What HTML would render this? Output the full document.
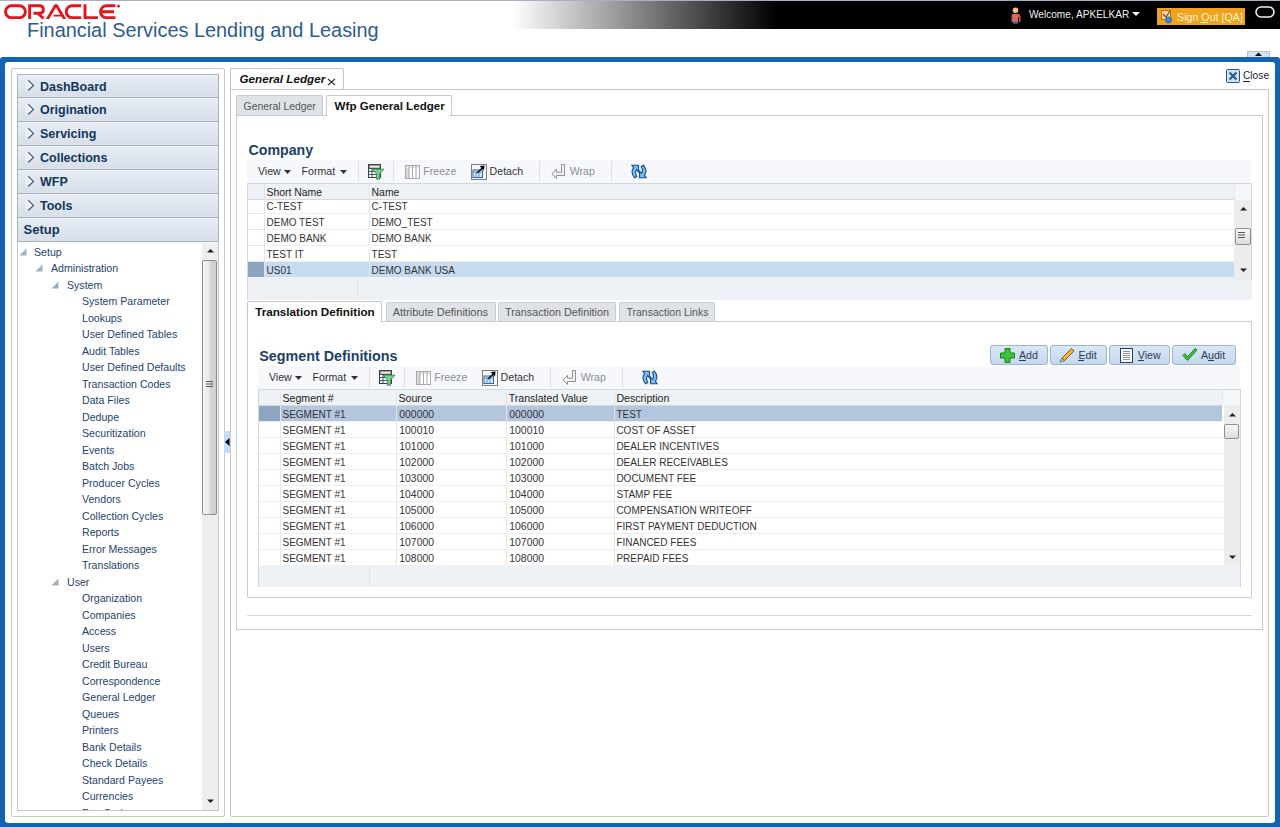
<!DOCTYPE html>
<html><head><meta charset="utf-8"><style>
html,body{margin:0;padding:0}
body{width:1280px;height:827px;overflow:hidden;position:relative;background:#fff;font-family:"Liberation Sans", sans-serif}
.t{position:absolute;white-space:nowrap;font-family:"Liberation Sans", sans-serif}
div{box-sizing:content-box}
</style></head><body>
<div style="position:absolute;left:0px;top:0px;width:1280px;height:1px;background:#a9b0c4"></div>
<div style="position:absolute;left:0px;top:1px;width:1280px;height:28px;background:linear-gradient(to right,#fff 512px,#000 776px)"></div>
<svg style="position:absolute;left:0;top:0" width="125" height="24" viewBox="0 0 125 24"><g fill="none" stroke="#e2151c" stroke-width="2.9"><rect x="5.55" y="5.75" width="19.8" height="11.9" rx="5.95"/><path d="M29.65 19.1 V5.75 H40 A3.8 3.8 0 0 1 40 13.3 H33.5 M37.2 13 L43.6 18.3"/><path d="M81.2 5.75 H72.2 A5.95 5.95 0 0 0 72.2 17.65 H81.2"/><path d="M85 4.3 V17.65 H98"/><path d="M115.4 5.75 H106.5 A5.95 5.95 0 0 0 106.5 17.65 H115.4 M102 11.7 H114"/></g><path d="M45.8 19.1 L54.6 4.3 L57.4 4.3 L66.2 19.1 L62.9 19.1 L56 7.6 L49.1 19.1z M53.6 14.7 H61.2 V16.4 H53.6z" fill="#e2151c"/><circle cx="118.5" cy="6.2" r="1.4" fill="#e2151c"/></svg>
<div class="t" style="left:27px;top:18.60px;font-size:19.9px;line-height:23px;color:#2d5b92;font-weight:normal;font-style:normal;">Financial Services Lending and Leasing</div>
<svg style="position:absolute;left:1009px;top:7px" width="13" height="17" viewBox="0 0 13 17"><circle cx="6.5" cy="3.3" r="2.8" fill="#f4c27e"/><path d="M3 7 h7 l1.5 2 v6 h-1.5 v-5 h-6 v5 h-1.5 v-6z" fill="#d9534a"/><rect x="4" y="7" width="5" height="7" fill="#e06a5e"/><rect x="4" y="14" width="5" height="2.5" fill="#4a78b8"/></svg>
<div class="t" style="left:1029px;top:9.00px;font-size:10.1px;line-height:12px;color:#f0f0f0;font-weight:normal;font-style:normal;">Welcome, APKELKAR</div>
<svg style="position:absolute;left:1132px;top:12px" width="9" height="5" viewBox="0 0 9 5"><path d="M0 0h8l-4 4z" fill="#fff"/></svg>
<div style="position:absolute;left:1157px;top:8px;width:88px;height:17px;background:#f1a31c"></div>
<svg style="position:absolute;left:1160px;top:9px" width="14" height="15" viewBox="0 0 14 15"><rect x="1.5" y="1.5" width="9" height="9" fill="#f3d9a8" stroke="#b0722a" stroke-width="1"/><path d="M3 5 L6 8 L10 2" fill="none" stroke="#8a4a10" stroke-width="1.2"/><circle cx="8.5" cy="11" r="3" fill="#3f86d6" stroke="#1d5aa6" stroke-width="0.8"/></svg>
<div class="t" style="left:1177px;top:11.29px;font-size:10.7px;line-height:12px;color:#fff4d8;font-weight:normal;font-style:normal;">Sign Out [QA]</div>
<div style="position:absolute;left:1200px;top:22px;width:8px;height:1px;background:#fff4d8"></div>
<svg style="position:absolute;left:1255px;top:6px" width="20" height="12" viewBox="0 0 20 12"><rect x="1" y="1" width="18" height="10" rx="5" fill="none" stroke="#e8eefc" stroke-width="1.6"/></svg>
<div style="position:absolute;left:1247px;top:51px;width:21px;height:6px;background:#d3e3f5;border:1px solid #b9c3cf;border-bottom:none"></div>
<svg style="position:absolute;left:1255px;top:52px" width="8" height="5" viewBox="0 0 8 5"><path d="M0 4h7l-3.5-3.5z" fill="#000"/></svg>
<div style="position:absolute;left:0px;top:57px;width:1280px;height:770px;background:#1463b2;border-radius:3px 3px 0 0"></div>
<div style="position:absolute;left:5px;top:62px;width:1270px;height:761px;background:#fff;border-radius:3px"></div>
<div style="position:absolute;left:11px;top:68px;width:212px;height:747px;border:1px solid #c5c9cf;border-radius:2px"></div>
<div style="position:absolute;left:17px;top:74px;width:200px;height:22px;background:linear-gradient(#e6ecf4,#d8dfe9);border:1px solid #aab2bd;border-bottom:none;box-shadow:inset 0 1px 0 #eef3f9"></div>
<svg style="position:absolute;left:25px;top:80px" width="10" height="12" viewBox="0 0 10 12"><path d="M0.5 2.5 L3.2 0.3 L8.5 5.4 L3.2 10.5 L0.5 8.5z" fill="#f1f5fa" stroke="none"/><path d="M3.2 0.3 L8.5 5.4 L3.2 10.5" fill="none" stroke="#3a4f6e" stroke-width="1.1"/></svg>
<div class="t" style="left:40px;top:79.67px;font-size:12.5px;line-height:14px;color:#12355e;font-weight:bold;font-style:normal;">DashBoard</div>
<div style="position:absolute;left:17px;top:97px;width:200px;height:23px;background:linear-gradient(#e6ecf4,#d8dfe9);border:1px solid #aab2bd;border-bottom:none;box-shadow:inset 0 1px 0 #eef3f9"></div>
<svg style="position:absolute;left:25px;top:104px" width="10" height="12" viewBox="0 0 10 12"><path d="M0.5 2.5 L3.2 0.3 L8.5 5.4 L3.2 10.5 L0.5 8.5z" fill="#f1f5fa" stroke="none"/><path d="M3.2 0.3 L8.5 5.4 L3.2 10.5" fill="none" stroke="#3a4f6e" stroke-width="1.1"/></svg>
<div class="t" style="left:40px;top:102.67px;font-size:12.5px;line-height:14px;color:#12355e;font-weight:bold;font-style:normal;">Origination</div>
<div style="position:absolute;left:17px;top:121px;width:200px;height:23px;background:linear-gradient(#e6ecf4,#d8dfe9);border:1px solid #aab2bd;border-bottom:none;box-shadow:inset 0 1px 0 #eef3f9"></div>
<svg style="position:absolute;left:25px;top:128px" width="10" height="12" viewBox="0 0 10 12"><path d="M0.5 2.5 L3.2 0.3 L8.5 5.4 L3.2 10.5 L0.5 8.5z" fill="#f1f5fa" stroke="none"/><path d="M3.2 0.3 L8.5 5.4 L3.2 10.5" fill="none" stroke="#3a4f6e" stroke-width="1.1"/></svg>
<div class="t" style="left:40px;top:126.67px;font-size:12.5px;line-height:14px;color:#12355e;font-weight:bold;font-style:normal;">Servicing</div>
<div style="position:absolute;left:17px;top:145px;width:200px;height:23px;background:linear-gradient(#e6ecf4,#d8dfe9);border:1px solid #aab2bd;border-bottom:none;box-shadow:inset 0 1px 0 #eef3f9"></div>
<svg style="position:absolute;left:25px;top:152px" width="10" height="12" viewBox="0 0 10 12"><path d="M0.5 2.5 L3.2 0.3 L8.5 5.4 L3.2 10.5 L0.5 8.5z" fill="#f1f5fa" stroke="none"/><path d="M3.2 0.3 L8.5 5.4 L3.2 10.5" fill="none" stroke="#3a4f6e" stroke-width="1.1"/></svg>
<div class="t" style="left:40px;top:150.67px;font-size:12.5px;line-height:14px;color:#12355e;font-weight:bold;font-style:normal;">Collections</div>
<div style="position:absolute;left:17px;top:169px;width:200px;height:23px;background:linear-gradient(#e6ecf4,#d8dfe9);border:1px solid #aab2bd;border-bottom:none;box-shadow:inset 0 1px 0 #eef3f9"></div>
<svg style="position:absolute;left:25px;top:176px" width="10" height="12" viewBox="0 0 10 12"><path d="M0.5 2.5 L3.2 0.3 L8.5 5.4 L3.2 10.5 L0.5 8.5z" fill="#f1f5fa" stroke="none"/><path d="M3.2 0.3 L8.5 5.4 L3.2 10.5" fill="none" stroke="#3a4f6e" stroke-width="1.1"/></svg>
<div class="t" style="left:40px;top:174.67px;font-size:12.5px;line-height:14px;color:#12355e;font-weight:bold;font-style:normal;">WFP</div>
<div style="position:absolute;left:17px;top:193px;width:200px;height:23px;background:linear-gradient(#e6ecf4,#d8dfe9);border:1px solid #aab2bd;border-bottom:none;box-shadow:inset 0 1px 0 #eef3f9"></div>
<svg style="position:absolute;left:25px;top:200px" width="10" height="12" viewBox="0 0 10 12"><path d="M0.5 2.5 L3.2 0.3 L8.5 5.4 L3.2 10.5 L0.5 8.5z" fill="#f1f5fa" stroke="none"/><path d="M3.2 0.3 L8.5 5.4 L3.2 10.5" fill="none" stroke="#3a4f6e" stroke-width="1.1"/></svg>
<div class="t" style="left:40px;top:198.67px;font-size:12.5px;line-height:14px;color:#12355e;font-weight:bold;font-style:normal;">Tools</div>
<div style="position:absolute;left:17px;top:217px;width:200px;height:23px;background:linear-gradient(#e6ecf4,#d8dfe9);border:1px solid #aab2bd;box-shadow:inset 0 1px 0 #eef3f9"></div>
<div class="t" style="left:23.5px;top:221.50px;font-size:13px;line-height:15px;color:#12355e;font-weight:bold;font-style:normal;">Setup</div>
<div style="position:absolute;left:17px;top:242px;width:200px;height:568px;border:1px solid #c5c9cf;border-top:none;background:#fff"></div>
<div style="position:absolute;left:202px;top:243px;width:16px;height:567px;background:#eeeeee"></div>
<svg style="position:absolute;left:206px;top:248px" width="9" height="5" viewBox="0 0 9 5"><path d="M1 4.5h7l-3.5-3.5z" fill="#222"/></svg>
<div style="position:absolute;left:202px;top:260px;width:13px;height:253px;background:linear-gradient(to right,#f4f4f4,#ececec 45%,#d6d6d6 55%,#cdcdcd);border:1px solid #8f8f8f;border-radius:2px"></div>
<svg style="position:absolute;left:206px;top:381px" width="8" height="7" viewBox="0 0 8 7"><path d="M0 .5h7M0 3h7M0 5.5h7" stroke="#555" stroke-width="1"/></svg>
<svg style="position:absolute;left:206px;top:799px" width="9" height="5" viewBox="0 0 9 5"><path d="M1 0.5h7l-3.5 3.5z" fill="#222"/></svg>
<div style="position:absolute;left:18px;top:243px;width:184px;height:567px;overflow:hidden">
<svg style="position:absolute;left:1px;top:4.5px" width="8" height="8" viewBox="0 0 8 8"><path d="M7.5 0.5 L7.5 7.5 L0.5 7.5z" fill="#9eadc0"/></svg>
<div class="t" style="left:16px;top:3.33px;font-size:10.6px;line-height:12px;color:#1e3f70;font-weight:normal;font-style:normal;">Setup</div>
<svg style="position:absolute;left:17px;top:20.5px" width="8" height="8" viewBox="0 0 8 8"><path d="M7.5 0.5 L7.5 7.5 L0.5 7.5z" fill="#9eadc0"/></svg>
<div class="t" style="left:33px;top:19.33px;font-size:10.6px;line-height:12px;color:#1e3f70;font-weight:normal;font-style:normal;">Administration</div>
<svg style="position:absolute;left:33px;top:37.5px" width="8" height="8" viewBox="0 0 8 8"><path d="M7.5 0.5 L7.5 7.5 L0.5 7.5z" fill="#9eadc0"/></svg>
<div class="t" style="left:49px;top:36.33px;font-size:10.6px;line-height:12px;color:#1e3f70;font-weight:normal;font-style:normal;">System</div>
<div class="t" style="left:64px;top:52.33px;font-size:10.6px;line-height:12px;color:#1e3f70;font-weight:normal;font-style:normal;">System Parameter</div>
<div class="t" style="left:64px;top:69.33px;font-size:10.6px;line-height:12px;color:#1e3f70;font-weight:normal;font-style:normal;">Lookups</div>
<div class="t" style="left:64px;top:85.33px;font-size:10.6px;line-height:12px;color:#1e3f70;font-weight:normal;font-style:normal;">User Defined Tables</div>
<div class="t" style="left:64px;top:102.33px;font-size:10.6px;line-height:12px;color:#1e3f70;font-weight:normal;font-style:normal;">Audit Tables</div>
<div class="t" style="left:64px;top:118.33px;font-size:10.6px;line-height:12px;color:#1e3f70;font-weight:normal;font-style:normal;">User Defined Defaults</div>
<div class="t" style="left:64px;top:135.33px;font-size:10.6px;line-height:12px;color:#1e3f70;font-weight:normal;font-style:normal;">Transaction Codes</div>
<div class="t" style="left:64px;top:151.33px;font-size:10.6px;line-height:12px;color:#1e3f70;font-weight:normal;font-style:normal;">Data Files</div>
<div class="t" style="left:64px;top:168.33px;font-size:10.6px;line-height:12px;color:#1e3f70;font-weight:normal;font-style:normal;">Dedupe</div>
<div class="t" style="left:64px;top:184.33px;font-size:10.6px;line-height:12px;color:#1e3f70;font-weight:normal;font-style:normal;">Securitization</div>
<div class="t" style="left:64px;top:201.33px;font-size:10.6px;line-height:12px;color:#1e3f70;font-weight:normal;font-style:normal;">Events</div>
<div class="t" style="left:64px;top:217.33px;font-size:10.6px;line-height:12px;color:#1e3f70;font-weight:normal;font-style:normal;">Batch Jobs</div>
<div class="t" style="left:64px;top:234.33px;font-size:10.6px;line-height:12px;color:#1e3f70;font-weight:normal;font-style:normal;">Producer Cycles</div>
<div class="t" style="left:64px;top:250.33px;font-size:10.6px;line-height:12px;color:#1e3f70;font-weight:normal;font-style:normal;">Vendors</div>
<div class="t" style="left:64px;top:267.33px;font-size:10.6px;line-height:12px;color:#1e3f70;font-weight:normal;font-style:normal;">Collection Cycles</div>
<div class="t" style="left:64px;top:283.33px;font-size:10.6px;line-height:12px;color:#1e3f70;font-weight:normal;font-style:normal;">Reports</div>
<div class="t" style="left:64px;top:300.33px;font-size:10.6px;line-height:12px;color:#1e3f70;font-weight:normal;font-style:normal;">Error Messages</div>
<div class="t" style="left:64px;top:316.33px;font-size:10.6px;line-height:12px;color:#1e3f70;font-weight:normal;font-style:normal;">Translations</div>
<svg style="position:absolute;left:33px;top:334.5px" width="8" height="8" viewBox="0 0 8 8"><path d="M7.5 0.5 L7.5 7.5 L0.5 7.5z" fill="#9eadc0"/></svg>
<div class="t" style="left:49px;top:333.33px;font-size:10.6px;line-height:12px;color:#1e3f70;font-weight:normal;font-style:normal;">User</div>
<div class="t" style="left:64px;top:349.33px;font-size:10.6px;line-height:12px;color:#1e3f70;font-weight:normal;font-style:normal;">Organization</div>
<div class="t" style="left:64px;top:366.33px;font-size:10.6px;line-height:12px;color:#1e3f70;font-weight:normal;font-style:normal;">Companies</div>
<div class="t" style="left:64px;top:382.33px;font-size:10.6px;line-height:12px;color:#1e3f70;font-weight:normal;font-style:normal;">Access</div>
<div class="t" style="left:64px;top:399.33px;font-size:10.6px;line-height:12px;color:#1e3f70;font-weight:normal;font-style:normal;">Users</div>
<div class="t" style="left:64px;top:415.33px;font-size:10.6px;line-height:12px;color:#1e3f70;font-weight:normal;font-style:normal;">Credit Bureau</div>
<div class="t" style="left:64px;top:432.33px;font-size:10.6px;line-height:12px;color:#1e3f70;font-weight:normal;font-style:normal;">Correspondence</div>
<div class="t" style="left:64px;top:448.33px;font-size:10.6px;line-height:12px;color:#1e3f70;font-weight:normal;font-style:normal;">General Ledger</div>
<div class="t" style="left:64px;top:465.33px;font-size:10.6px;line-height:12px;color:#1e3f70;font-weight:normal;font-style:normal;">Queues</div>
<div class="t" style="left:64px;top:481.33px;font-size:10.6px;line-height:12px;color:#1e3f70;font-weight:normal;font-style:normal;">Printers</div>
<div class="t" style="left:64px;top:498.33px;font-size:10.6px;line-height:12px;color:#1e3f70;font-weight:normal;font-style:normal;">Bank Details</div>
<div class="t" style="left:64px;top:514.33px;font-size:10.6px;line-height:12px;color:#1e3f70;font-weight:normal;font-style:normal;">Check Details</div>
<div class="t" style="left:64px;top:531.33px;font-size:10.6px;line-height:12px;color:#1e3f70;font-weight:normal;font-style:normal;">Standard Payees</div>
<div class="t" style="left:64px;top:547.33px;font-size:10.6px;line-height:12px;color:#1e3f70;font-weight:normal;font-style:normal;">Currencies</div>
<div class="t" style="left:64px;top:564.33px;font-size:10.6px;line-height:12px;color:#1e3f70;font-weight:normal;font-style:normal;">Fee Codes</div>
</div>
<div style="position:absolute;left:224px;top:431px;width:6px;height:22px;background:#c6dcf3"></div>
<svg style="position:absolute;left:225px;top:438px" width="5" height="8" viewBox="0 0 5 8"><path d="M4.5 0 V8 L0 4z" fill="#000"/></svg>
<div style="position:absolute;left:230px;top:68px;width:112px;height:21px;border:1px solid #c5c9cf;border-bottom:none;border-radius:0 3px 0 0;background:#fff"></div>
<div class="t" style="left:239.5px;top:71.75px;font-size:11.7px;line-height:13px;color:#111;font-weight:bold;font-style:italic;">General Ledger</div>
<svg style="position:absolute;left:327px;top:78px" width="9" height="8" viewBox="0 0 9 8"><path d="M1 1 L8 7 M8 1 L1 7" stroke="#333" stroke-width="1.2"/></svg>
<div style="position:absolute;left:230px;top:89px;width:1037px;height:726px;border:1px solid #c5c9cf;border-radius:0 0 2px 2px"></div>
<svg style="position:absolute;left:1226px;top:69px" width="14" height="14" viewBox="0 0 14 14"><rect x="0.5" y="0.5" width="13" height="13" rx="1" fill="#cfe3f7" stroke="#29507f"/><path d="M3.5 3.5 L10.5 10.5 M10.5 3.5 L3.5 10.5" stroke="#2b5a8e" stroke-width="2.2"/></svg>
<div class="t" style="left:1243px;top:70.47px;font-size:10.2px;line-height:12px;color:#1a2436;font-weight:normal;font-style:normal;text-decoration:none">Close</div>
<div style="position:absolute;left:1243px;top:81px;width:7px;height:1px;background:#1a2436"></div>
<div style="position:absolute;left:236px;top:95px;width:85px;height:20px;background:#dfe3e8;border:1px solid #c9cdd3;border-bottom:none;border-radius:2px 2px 0 0"></div>
<div class="t" style="left:243.6px;top:101.40px;font-size:10.4px;line-height:12px;color:#555;font-weight:normal;font-style:normal;">General Ledger</div>
<div style="position:absolute;left:326px;top:95px;width:124px;height:20px;background:#fff;border:1px solid #c5c9cf;border-bottom:none;border-radius:2px 2px 0 0"></div>
<div class="t" style="left:334.6px;top:99.18px;font-size:11.6px;line-height:13px;color:#111;font-weight:bold;font-style:normal;">Wfp General Ledger</div>
<div style="position:absolute;left:236px;top:115px;width:1025px;height:514px;border:1px solid #c9cdd3;border-top:none"></div>
<div style="position:absolute;left:236px;top:115px;width:90px;height:1px;background:#c9cdd3"></div>
<div style="position:absolute;left:450px;top:115px;width:812px;height:1px;background:#c9cdd3"></div>
<div class="t" style="left:248.5px;top:142.08px;font-size:14.2px;line-height:16px;color:#1b3f6a;font-weight:bold;font-style:normal;">Company</div>
<div style="position:absolute;left:247px;top:160px;width:1004px;height:23px;background:#f6f8fc"></div>
<div class="t" style="left:258px;top:164.83px;font-size:10.6px;line-height:12px;color:#333;font-weight:normal;font-style:normal;">View</div>
<svg style="position:absolute;left:284px;top:170px" width="7" height="4" viewBox="0 0 7 4"><path d="M0 0h7l-3.5 4z" fill="#333"/></svg>
<div class="t" style="left:301.6px;top:164.83px;font-size:10.6px;line-height:12px;color:#333;font-weight:normal;font-style:normal;">Format</div>
<svg style="position:absolute;left:340px;top:170px" width="7" height="4" viewBox="0 0 7 4"><path d="M0 0h7l-3.5 4z" fill="#333"/></svg>
<div style="position:absolute;left:358px;top:161px;width:1px;height:21px;background:#dde1e6"></div>
<svg style="position:absolute;left:368px;top:164px" width="17" height="16" viewBox="0 0 17 16"><rect x="0.5" y="0.5" width="12" height="13" fill="#fff" stroke="#34445f"/><rect x="1.5" y="1.5" width="10" height="2.5" fill="#f3efd6" stroke="#6b5a3a" stroke-width="0.6"/><path d="M0.5 4.5h12M0.5 7.5h12M0.5 10.5h12M4 4.5v9" stroke="#34445f" stroke-width="0.9"/><path d="M4 5.2 H16 L11.5 10 V15.2 L8.5 15.2 V10z" fill="#74d08a" stroke="#2f8040" stroke-width="0.8"/></svg>
<div style="position:absolute;left:393px;top:161px;width:1px;height:21px;background:#dde1e6"></div>
<svg style="position:absolute;left:405px;top:165px" width="16" height="15" viewBox="0 0 16 15"><rect x="0.5" y="0.5" width="14" height="13" fill="#fff" stroke="#a9a9a9"/><rect x="1" y="1" width="13" height="2" fill="#e6e6e6"/><rect x="1" y="3" width="3" height="10" fill="#d8d8d8"/><path d="M4 .5v13M7.5 .5v13M11 .5v13" stroke="#a9a9a9"/></svg>
<div class="t" style="left:423.3px;top:164.83px;font-size:10.6px;line-height:12px;color:#8a8f96;font-weight:normal;font-style:normal;">Freeze</div>
<svg style="position:absolute;left:471px;top:164px" width="16" height="16" viewBox="0 0 16 16"><rect x="0.5" y="0.5" width="15" height="15" fill="none" stroke="#000" stroke-width="1" stroke-dasharray="1 1"/><rect x="2" y="6" width="9.5" height="7.5" fill="#d6ebff" stroke="#2c64a8" stroke-width="1"/><path d="M2 8h9.5M5 8v5.5M8 8v5.5" stroke="#4f86c6" stroke-width="0.9"/><path d="M6 9 L12.5 3" stroke="#000" stroke-width="1.4"/><path d="M8.5 2 L13.5 1.5 L13 6.5z" fill="#000"/></svg>
<div class="t" style="left:489.6px;top:164.83px;font-size:10.6px;line-height:12px;color:#333;font-weight:normal;font-style:normal;">Detach</div>
<div style="position:absolute;left:539px;top:161px;width:1px;height:21px;background:#dde1e6"></div>
<svg style="position:absolute;left:551px;top:164px" width="15" height="16" viewBox="0 0 15 16"><path d="M10.5 0.5 H13.5 V11.5 H5.5 V14.5 L0.8 9.8 L5.5 5.3 V8.2 H10.5 Z" fill="#f2f2f2" stroke="#8f8f8f" stroke-width="1"/></svg>
<div class="t" style="left:569.7px;top:164.83px;font-size:10.6px;line-height:12px;color:#8a8f96;font-weight:normal;font-style:normal;">Wrap</div>
<div style="position:absolute;left:611px;top:161px;width:1px;height:21px;background:#dde1e6"></div>
<svg style="position:absolute;left:631px;top:164px" width="16" height="16" viewBox="0 0 16 16"><path d="M0.8 1.2 L7.5 1.2 L7.5 7.8 L5.6 5.6 C4 7.5 4.4 10 5.8 12.5 L3.6 13.8 C0.8 10.5 0.6 6.5 2.6 3.6 Z" fill="#79bdf5" stroke="#1a4d8c" stroke-width="1.1"/><path d="M15.2 13.8 L8.5 13.8 L8.5 7.2 L10.4 9.4 C12 7.5 11.6 5 10.2 2.5 L12.4 1.2 C15.2 4.5 15.4 8.5 13.4 11.4 Z" fill="#79bdf5" stroke="#1a4d8c" stroke-width="1.1"/></svg>
<div style="position:absolute;left:247px;top:183px;width:1004px;height:1px;background:#d3d8de"></div>
<div style="position:absolute;left:247px;top:183px;width:1px;height:117px;background:#d3d8de"></div>
<div style="position:absolute;left:248px;top:184px;width:986px;height:15px;background:#eef1f5"></div>
<div style="position:absolute;left:248px;top:199px;width:986px;height:1px;background:#d3d8de"></div>
<div class="t" style="left:266.5px;top:186.90px;font-size:10.4px;line-height:12px;color:#222;font-weight:normal;font-style:normal;">Short Name</div>
<div class="t" style="left:371.6px;top:186.90px;font-size:10.4px;line-height:12px;color:#222;font-weight:normal;font-style:normal;">Name</div>
<div style="position:absolute;left:248px;top:200px;width:986px;height:78px;background:#fff"></div>
<div style="position:absolute;left:248px;top:213px;width:986px;height:1px;background:#edf0f3"></div>
<div class="t" style="left:266.5px;top:201.13px;font-size:10px;line-height:12px;color:#333;font-weight:normal;font-style:normal;">C-TEST</div>
<div class="t" style="left:371.6px;top:201.13px;font-size:10px;line-height:12px;color:#333;font-weight:normal;font-style:normal;">C-TEST</div>
<div style="position:absolute;left:248px;top:229px;width:986px;height:1px;background:#edf0f3"></div>
<div class="t" style="left:266.5px;top:217.13px;font-size:10px;line-height:12px;color:#333;font-weight:normal;font-style:normal;">DEMO TEST</div>
<div class="t" style="left:371.6px;top:217.13px;font-size:10px;line-height:12px;color:#333;font-weight:normal;font-style:normal;">DEMO_TEST</div>
<div style="position:absolute;left:248px;top:245px;width:986px;height:1px;background:#edf0f3"></div>
<div class="t" style="left:266.5px;top:233.13px;font-size:10px;line-height:12px;color:#333;font-weight:normal;font-style:normal;">DEMO BANK</div>
<div class="t" style="left:371.6px;top:233.13px;font-size:10px;line-height:12px;color:#333;font-weight:normal;font-style:normal;">DEMO BANK</div>
<div style="position:absolute;left:248px;top:261px;width:986px;height:1px;background:#edf0f3"></div>
<div class="t" style="left:266.5px;top:249.14px;font-size:10px;line-height:12px;color:#333;font-weight:normal;font-style:normal;">TEST IT</div>
<div class="t" style="left:371.6px;top:249.14px;font-size:10px;line-height:12px;color:#333;font-weight:normal;font-style:normal;">TEST</div>
<div style="position:absolute;left:264px;top:262px;width:970px;height:15px;background:#c6dbf0"></div>
<div style="position:absolute;left:248px;top:262px;width:16px;height:15px;background:#8ea3bd"></div>
<div class="t" style="left:266.5px;top:265.14px;font-size:10px;line-height:12px;color:#333;font-weight:normal;font-style:normal;">US01</div>
<div class="t" style="left:371.6px;top:265.14px;font-size:10px;line-height:12px;color:#333;font-weight:normal;font-style:normal;">DEMO BANK USA</div>
<div style="position:absolute;left:248px;top:200px;width:16px;height:77px;background:#eef1f5;opacity:0.0"></div>
<div style="position:absolute;left:264px;top:184px;width:1px;height:93px;background:#dfe3e8"></div>
<div style="position:absolute;left:369px;top:184px;width:1px;height:93px;background:#e3e6ea"></div>
<div style="position:absolute;left:248px;top:213px;width:16px;height:1px;background:#e1e5ea"></div>
<div style="position:absolute;left:248px;top:229px;width:16px;height:1px;background:#e1e5ea"></div>
<div style="position:absolute;left:248px;top:245px;width:16px;height:1px;background:#e1e5ea"></div>
<div style="position:absolute;left:248px;top:261px;width:16px;height:1px;background:#e1e5ea"></div>
<div style="position:absolute;left:248px;top:277px;width:1004px;height:23px;background:#eef1f6"></div>
<div style="position:absolute;left:357px;top:277px;width:1px;height:23px;background:#dfe3e8"></div>
<div style="position:absolute;left:1234px;top:184px;width:17px;height:16px;background:#f5f7fa;border-left:1px solid #e6e9ed"></div>
<div style="position:absolute;left:1251px;top:183px;width:1px;height:97px;background:#d3d8de"></div>
<div style="position:absolute;left:1234px;top:200px;width:17px;height:80px;background:#ececec"></div>
<svg style="position:absolute;left:1239px;top:206px" width="9" height="5" viewBox="0 0 9 5"><path d="M1 4.5h7l-3.5-3.5z" fill="#222"/></svg>
<div style="position:absolute;left:1235px;top:228px;width:14px;height:15px;background:linear-gradient(#f6f6f6,#dcdcdc);border:1px solid #8f8f8f;border-radius:2px"></div>
<svg style="position:absolute;left:1238px;top:232px" width="8" height="7" viewBox="0 0 8 7"><path d="M0 .5h7M0 3h7M0 5.5h7" stroke="#555" stroke-width="1"/></svg>
<svg style="position:absolute;left:1239px;top:268px" width="9" height="5" viewBox="0 0 9 5"><path d="M1 0.5h7l-3.5 3.5z" fill="#222"/></svg>
<div style="position:absolute;left:247px;top:301px;width:133px;height:20px;background:#fff;border:1px solid #c5c9cf;border-bottom:none;border-radius:2px 2px 0 0"></div>
<div class="t" style="left:255.2px;top:305.45px;font-size:11.7px;line-height:13px;color:#111;font-weight:bold;font-style:normal;">Translation Definition</div>
<div style="position:absolute;left:386px;top:302px;width:108px;height:19px;background:#dfe3e8;border:1px solid #c9cdd3;border-bottom:none;border-radius:2px 2px 0 0"></div>
<div class="t" style="left:392.7px;top:305.69px;font-size:11px;line-height:13px;color:#555;font-weight:normal;font-style:normal;">Attribute Definitions</div>
<div style="position:absolute;left:498px;top:302px;width:116px;height:19px;background:#dfe3e8;border:1px solid #c9cdd3;border-bottom:none;border-radius:2px 2px 0 0"></div>
<div class="t" style="left:505px;top:306.26px;font-size:10.8px;line-height:12px;color:#555;font-weight:normal;font-style:normal;">Transaction Definition</div>
<div style="position:absolute;left:619px;top:302px;width:94px;height:19px;background:#dfe3e8;border:1px solid #c9cdd3;border-bottom:none;border-radius:2px 2px 0 0"></div>
<div class="t" style="left:626.5px;top:306.36px;font-size:10.5px;line-height:12px;color:#555;font-weight:normal;font-style:normal;">Transaction Links</div>
<div style="position:absolute;left:247px;top:321px;width:1003px;height:276px;border:1px solid #c9cdd3;border-top:none;border-radius:0 0 2px 2px"></div>
<div style="position:absolute;left:381px;top:321px;width:871px;height:1px;background:#c9cdd3"></div>
<div class="t" style="left:259.3px;top:348.25px;font-size:14.3px;line-height:16px;color:#1b3f6a;font-weight:bold;font-style:normal;">Segment Definitions</div>
<div style="position:absolute;left:990px;top:345px;width:58px;height:20px;background:linear-gradient(#d9e7f6,#c3d8ef);border:1px solid #9db5cf;border-radius:3px;box-sizing:border-box"></div>
<svg style="position:absolute;left:1000px;top:348px" width="15" height="15" viewBox="0 0 15 15"><path d="M5 0.5h5v4.5h4.5v5h-4.5v4.5h-5v-4.5h-4.5v-5h4.5z" fill="#3cc43c" stroke="#1c7d1c" stroke-width="1"/></svg>
<div class="t" style="left:1019px;top:349.33px;font-size:10.6px;line-height:12px;color:#2b3c55;font-weight:normal;font-style:normal;">Add</div>
<div style="position:absolute;left:1019px;top:360px;width:7px;height:1px;background:#2b3c55"></div>
<div style="position:absolute;left:1050px;top:345px;width:57px;height:20px;background:linear-gradient(#d9e7f6,#c3d8ef);border:1px solid #9db5cf;border-radius:3px;box-sizing:border-box"></div>
<svg style="position:absolute;left:1059px;top:347px" width="17" height="16" viewBox="0 0 17 16"><path d="M3 11 L12.5 1.5 L15 4 L5.5 13.5z" fill="#f2b33a" stroke="#7a4a10" stroke-width="0.9"/><path d="M3 11 L1 15 L5.5 13.5z" fill="#f4dcb0" stroke="#444" stroke-width="0.7"/></svg>
<div class="t" style="left:1078.4px;top:349.33px;font-size:10.6px;line-height:12px;color:#2b3c55;font-weight:normal;font-style:normal;">Edit</div>
<div style="position:absolute;left:1078.4px;top:360px;width:6px;height:1px;background:#2b3c55"></div>
<div style="position:absolute;left:1109px;top:345px;width:61px;height:20px;background:linear-gradient(#d9e7f6,#c3d8ef);border:1px solid #9db5cf;border-radius:3px;box-sizing:border-box"></div>
<svg style="position:absolute;left:1120px;top:348px" width="14" height="16" viewBox="0 0 14 16"><rect x="0.5" y="0.5" width="12" height="14" fill="#fbfbfb" stroke="#2e3d57"/><path d="M3 3.5h7M3 5.5h7M3 7.5h7M3 9.5h7M3 11.5h7" stroke="#7a8597" stroke-width="0.9"/></svg>
<div class="t" style="left:1137.8px;top:349.33px;font-size:10.6px;line-height:12px;color:#2b3c55;font-weight:normal;font-style:normal;">View</div>
<div style="position:absolute;left:1137.8px;top:360px;width:6px;height:1px;background:#2b3c55"></div>
<div style="position:absolute;left:1172px;top:345px;width:64px;height:20px;background:linear-gradient(#d9e7f6,#c3d8ef);border:1px solid #9db5cf;border-radius:3px;box-sizing:border-box"></div>
<svg style="position:absolute;left:1182px;top:348px" width="16" height="15" viewBox="0 0 16 15"><path d="M1 7.5 L5.5 12.5 L15 2 L13 0.5 L5.5 9 L3 5.5z" fill="#3cc43c" stroke="#1c7d1c" stroke-width="1"/></svg>
<div class="t" style="left:1201px;top:349.33px;font-size:10.6px;line-height:12px;color:#2b3c55;font-weight:normal;font-style:normal;">Audit</div>
<div style="position:absolute;left:1208px;top:360px;width:6px;height:1px;background:#2b3c55"></div>
<div style="position:absolute;left:258px;top:366px;width:982px;height:23px;background:#f6f8fc"></div>
<div class="t" style="left:269px;top:370.83px;font-size:10.6px;line-height:12px;color:#333;font-weight:normal;font-style:normal;">View</div>
<svg style="position:absolute;left:295px;top:376px" width="7" height="4" viewBox="0 0 7 4"><path d="M0 0h7l-3.5 4z" fill="#333"/></svg>
<div class="t" style="left:312.6px;top:370.83px;font-size:10.6px;line-height:12px;color:#333;font-weight:normal;font-style:normal;">Format</div>
<svg style="position:absolute;left:351px;top:376px" width="7" height="4" viewBox="0 0 7 4"><path d="M0 0h7l-3.5 4z" fill="#333"/></svg>
<div style="position:absolute;left:369px;top:367px;width:1px;height:21px;background:#dde1e6"></div>
<svg style="position:absolute;left:379px;top:370px" width="17" height="16" viewBox="0 0 17 16"><rect x="0.5" y="0.5" width="12" height="13" fill="#fff" stroke="#34445f"/><rect x="1.5" y="1.5" width="10" height="2.5" fill="#f3efd6" stroke="#6b5a3a" stroke-width="0.6"/><path d="M0.5 4.5h12M0.5 7.5h12M0.5 10.5h12M4 4.5v9" stroke="#34445f" stroke-width="0.9"/><path d="M4 5.2 H16 L11.5 10 V15.2 L8.5 15.2 V10z" fill="#74d08a" stroke="#2f8040" stroke-width="0.8"/></svg>
<div style="position:absolute;left:404px;top:367px;width:1px;height:21px;background:#dde1e6"></div>
<svg style="position:absolute;left:416px;top:371px" width="16" height="15" viewBox="0 0 16 15"><rect x="0.5" y="0.5" width="14" height="13" fill="#fff" stroke="#a9a9a9"/><rect x="1" y="1" width="13" height="2" fill="#e6e6e6"/><rect x="1" y="3" width="3" height="10" fill="#d8d8d8"/><path d="M4 .5v13M7.5 .5v13M11 .5v13" stroke="#a9a9a9"/></svg>
<div class="t" style="left:434.3px;top:370.83px;font-size:10.6px;line-height:12px;color:#8a8f96;font-weight:normal;font-style:normal;">Freeze</div>
<svg style="position:absolute;left:482px;top:370px" width="16" height="16" viewBox="0 0 16 16"><rect x="0.5" y="0.5" width="15" height="15" fill="none" stroke="#000" stroke-width="1" stroke-dasharray="1 1"/><rect x="2" y="6" width="9.5" height="7.5" fill="#d6ebff" stroke="#2c64a8" stroke-width="1"/><path d="M2 8h9.5M5 8v5.5M8 8v5.5" stroke="#4f86c6" stroke-width="0.9"/><path d="M6 9 L12.5 3" stroke="#000" stroke-width="1.4"/><path d="M8.5 2 L13.5 1.5 L13 6.5z" fill="#000"/></svg>
<div class="t" style="left:500.6px;top:370.83px;font-size:10.6px;line-height:12px;color:#333;font-weight:normal;font-style:normal;">Detach</div>
<div style="position:absolute;left:550px;top:367px;width:1px;height:21px;background:#dde1e6"></div>
<svg style="position:absolute;left:562px;top:370px" width="15" height="16" viewBox="0 0 15 16"><path d="M10.5 0.5 H13.5 V11.5 H5.5 V14.5 L0.8 9.8 L5.5 5.3 V8.2 H10.5 Z" fill="#f2f2f2" stroke="#8f8f8f" stroke-width="1"/></svg>
<div class="t" style="left:580.7px;top:370.83px;font-size:10.6px;line-height:12px;color:#8a8f96;font-weight:normal;font-style:normal;">Wrap</div>
<div style="position:absolute;left:622px;top:367px;width:1px;height:21px;background:#dde1e6"></div>
<svg style="position:absolute;left:642px;top:370px" width="16" height="16" viewBox="0 0 16 16"><path d="M0.8 1.2 L7.5 1.2 L7.5 7.8 L5.6 5.6 C4 7.5 4.4 10 5.8 12.5 L3.6 13.8 C0.8 10.5 0.6 6.5 2.6 3.6 Z" fill="#79bdf5" stroke="#1a4d8c" stroke-width="1.1"/><path d="M15.2 13.8 L8.5 13.8 L8.5 7.2 L10.4 9.4 C12 7.5 11.6 5 10.2 2.5 L12.4 1.2 C15.2 4.5 15.4 8.5 13.4 11.4 Z" fill="#79bdf5" stroke="#1a4d8c" stroke-width="1.1"/></svg>
<div style="position:absolute;left:258px;top:389px;width:982px;height:1px;background:#d3d8de"></div>
<div style="position:absolute;left:258px;top:389px;width:1px;height:198px;background:#d3d8de"></div>
<div style="position:absolute;left:259px;top:390px;width:963px;height:15px;background:#eef1f5"></div>
<div style="position:absolute;left:259px;top:405px;width:963px;height:1px;background:#d3d8de"></div>
<div class="t" style="left:282.5px;top:391.93px;font-size:10.6px;line-height:12px;color:#222;font-weight:normal;font-style:normal;">Segment #</div>
<div class="t" style="left:398.5px;top:391.93px;font-size:10.6px;line-height:12px;color:#222;font-weight:normal;font-style:normal;">Source</div>
<div class="t" style="left:508.7px;top:391.93px;font-size:10.6px;line-height:12px;color:#222;font-weight:normal;font-style:normal;">Translated Value</div>
<div class="t" style="left:616.4px;top:391.93px;font-size:10.6px;line-height:12px;color:#222;font-weight:normal;font-style:normal;">Description</div>
<div style="position:absolute;left:280px;top:406px;width:942px;height:15px;background:#b3c6de"></div>
<div style="position:absolute;left:259px;top:406px;width:21px;height:15px;background:#8ea5c2"></div>
<div style="position:absolute;left:259px;top:421px;width:963px;height:1px;background:#edf0f3"></div>
<div class="t" style="left:282.5px;top:408.94px;font-size:10px;line-height:12px;color:#333;font-weight:normal;font-style:normal;">SEGMENT #1</div>
<div class="t" style="left:399.3px;top:408.80px;font-size:10.4px;line-height:12px;color:#333;font-weight:normal;font-style:normal;">000000</div>
<div class="t" style="left:509.3px;top:408.80px;font-size:10.4px;line-height:12px;color:#333;font-weight:normal;font-style:normal;">000000</div>
<div class="t" style="left:616.4px;top:408.94px;font-size:10px;line-height:12px;color:#333;font-weight:normal;font-style:normal;">TEST</div>
<div style="position:absolute;left:259px;top:437px;width:963px;height:1px;background:#edf0f3"></div>
<div class="t" style="left:282.5px;top:424.94px;font-size:10px;line-height:12px;color:#333;font-weight:normal;font-style:normal;">SEGMENT #1</div>
<div class="t" style="left:399.3px;top:424.80px;font-size:10.4px;line-height:12px;color:#333;font-weight:normal;font-style:normal;">100010</div>
<div class="t" style="left:509.3px;top:424.80px;font-size:10.4px;line-height:12px;color:#333;font-weight:normal;font-style:normal;">100010</div>
<div class="t" style="left:616.4px;top:424.94px;font-size:10px;line-height:12px;color:#333;font-weight:normal;font-style:normal;">COST OF ASSET</div>
<div style="position:absolute;left:259px;top:453px;width:963px;height:1px;background:#edf0f3"></div>
<div class="t" style="left:282.5px;top:440.94px;font-size:10px;line-height:12px;color:#333;font-weight:normal;font-style:normal;">SEGMENT #1</div>
<div class="t" style="left:399.3px;top:440.80px;font-size:10.4px;line-height:12px;color:#333;font-weight:normal;font-style:normal;">101000</div>
<div class="t" style="left:509.3px;top:440.80px;font-size:10.4px;line-height:12px;color:#333;font-weight:normal;font-style:normal;">101000</div>
<div class="t" style="left:616.4px;top:440.94px;font-size:10px;line-height:12px;color:#333;font-weight:normal;font-style:normal;">DEALER INCENTIVES</div>
<div style="position:absolute;left:259px;top:469px;width:963px;height:1px;background:#edf0f3"></div>
<div class="t" style="left:282.5px;top:456.94px;font-size:10px;line-height:12px;color:#333;font-weight:normal;font-style:normal;">SEGMENT #1</div>
<div class="t" style="left:399.3px;top:456.80px;font-size:10.4px;line-height:12px;color:#333;font-weight:normal;font-style:normal;">102000</div>
<div class="t" style="left:509.3px;top:456.80px;font-size:10.4px;line-height:12px;color:#333;font-weight:normal;font-style:normal;">102000</div>
<div class="t" style="left:616.4px;top:456.94px;font-size:10px;line-height:12px;color:#333;font-weight:normal;font-style:normal;">DEALER RECEIVABLES</div>
<div style="position:absolute;left:259px;top:485px;width:963px;height:1px;background:#edf0f3"></div>
<div class="t" style="left:282.5px;top:472.94px;font-size:10px;line-height:12px;color:#333;font-weight:normal;font-style:normal;">SEGMENT #1</div>
<div class="t" style="left:399.3px;top:472.80px;font-size:10.4px;line-height:12px;color:#333;font-weight:normal;font-style:normal;">103000</div>
<div class="t" style="left:509.3px;top:472.80px;font-size:10.4px;line-height:12px;color:#333;font-weight:normal;font-style:normal;">103000</div>
<div class="t" style="left:616.4px;top:472.94px;font-size:10px;line-height:12px;color:#333;font-weight:normal;font-style:normal;">DOCUMENT FEE</div>
<div style="position:absolute;left:259px;top:501px;width:963px;height:1px;background:#edf0f3"></div>
<div class="t" style="left:282.5px;top:488.94px;font-size:10px;line-height:12px;color:#333;font-weight:normal;font-style:normal;">SEGMENT #1</div>
<div class="t" style="left:399.3px;top:488.80px;font-size:10.4px;line-height:12px;color:#333;font-weight:normal;font-style:normal;">104000</div>
<div class="t" style="left:509.3px;top:488.80px;font-size:10.4px;line-height:12px;color:#333;font-weight:normal;font-style:normal;">104000</div>
<div class="t" style="left:616.4px;top:488.94px;font-size:10px;line-height:12px;color:#333;font-weight:normal;font-style:normal;">STAMP FEE</div>
<div style="position:absolute;left:259px;top:517px;width:963px;height:1px;background:#edf0f3"></div>
<div class="t" style="left:282.5px;top:504.94px;font-size:10px;line-height:12px;color:#333;font-weight:normal;font-style:normal;">SEGMENT #1</div>
<div class="t" style="left:399.3px;top:504.80px;font-size:10.4px;line-height:12px;color:#333;font-weight:normal;font-style:normal;">105000</div>
<div class="t" style="left:509.3px;top:504.80px;font-size:10.4px;line-height:12px;color:#333;font-weight:normal;font-style:normal;">105000</div>
<div class="t" style="left:616.4px;top:504.94px;font-size:10px;line-height:12px;color:#333;font-weight:normal;font-style:normal;">COMPENSATION WRITEOFF</div>
<div style="position:absolute;left:259px;top:533px;width:963px;height:1px;background:#edf0f3"></div>
<div class="t" style="left:282.5px;top:520.93px;font-size:10px;line-height:12px;color:#333;font-weight:normal;font-style:normal;">SEGMENT #1</div>
<div class="t" style="left:399.3px;top:520.80px;font-size:10.4px;line-height:12px;color:#333;font-weight:normal;font-style:normal;">106000</div>
<div class="t" style="left:509.3px;top:520.80px;font-size:10.4px;line-height:12px;color:#333;font-weight:normal;font-style:normal;">106000</div>
<div class="t" style="left:616.4px;top:520.93px;font-size:10px;line-height:12px;color:#333;font-weight:normal;font-style:normal;">FIRST PAYMENT DEDUCTION</div>
<div style="position:absolute;left:259px;top:549px;width:963px;height:1px;background:#edf0f3"></div>
<div class="t" style="left:282.5px;top:536.93px;font-size:10px;line-height:12px;color:#333;font-weight:normal;font-style:normal;">SEGMENT #1</div>
<div class="t" style="left:399.3px;top:536.80px;font-size:10.4px;line-height:12px;color:#333;font-weight:normal;font-style:normal;">107000</div>
<div class="t" style="left:509.3px;top:536.80px;font-size:10.4px;line-height:12px;color:#333;font-weight:normal;font-style:normal;">107000</div>
<div class="t" style="left:616.4px;top:536.93px;font-size:10px;line-height:12px;color:#333;font-weight:normal;font-style:normal;">FINANCED FEES</div>
<div style="position:absolute;left:259px;top:565px;width:963px;height:1px;background:#edf0f3"></div>
<div class="t" style="left:282.5px;top:552.93px;font-size:10px;line-height:12px;color:#333;font-weight:normal;font-style:normal;">SEGMENT #1</div>
<div class="t" style="left:399.3px;top:552.80px;font-size:10.4px;line-height:12px;color:#333;font-weight:normal;font-style:normal;">108000</div>
<div class="t" style="left:509.3px;top:552.80px;font-size:10.4px;line-height:12px;color:#333;font-weight:normal;font-style:normal;">108000</div>
<div class="t" style="left:616.4px;top:552.93px;font-size:10px;line-height:12px;color:#333;font-weight:normal;font-style:normal;">PREPAID FEES</div>
<div style="position:absolute;left:280px;top:390px;width:1px;height:175px;background:#e3e6ea"></div>
<div style="position:absolute;left:396px;top:390px;width:1px;height:175px;background:#e3e6ea"></div>
<div style="position:absolute;left:506px;top:390px;width:1px;height:175px;background:#e3e6ea"></div>
<div style="position:absolute;left:614px;top:390px;width:1px;height:175px;background:#e3e6ea"></div>
<div style="position:absolute;left:259px;top:565px;width:981px;height:22px;background:#eef1f6"></div>
<div style="position:absolute;left:369px;top:565px;width:1px;height:22px;background:#dfe3e8"></div>
<div style="position:absolute;left:1222px;top:390px;width:18px;height:15px;background:#f5f7fa;border-left:1px solid #e3e6ea"></div>
<div style="position:absolute;left:1240px;top:389px;width:1px;height:198px;background:#d3d8de"></div>
<div style="position:absolute;left:1224px;top:405px;width:16px;height:160px;background:#ececec"></div>
<svg style="position:absolute;left:1228px;top:412px" width="9" height="5" viewBox="0 0 9 5"><path d="M1 4.5h7l-3.5-3.5z" fill="#222"/></svg>
<div style="position:absolute;left:1224px;top:424px;width:13px;height:13px;background:linear-gradient(#f6f6f6,#dcdcdc);border:1px solid #8f8f8f;border-radius:2px"></div>
<svg style="position:absolute;left:1228px;top:555px" width="9" height="5" viewBox="0 0 9 5"><path d="M1 0.5h7l-3.5 3.5z" fill="#222"/></svg>
<div style="position:absolute;left:247px;top:615px;width:1005px;height:1px;background:#d5d9de"></div>
</body></html>
